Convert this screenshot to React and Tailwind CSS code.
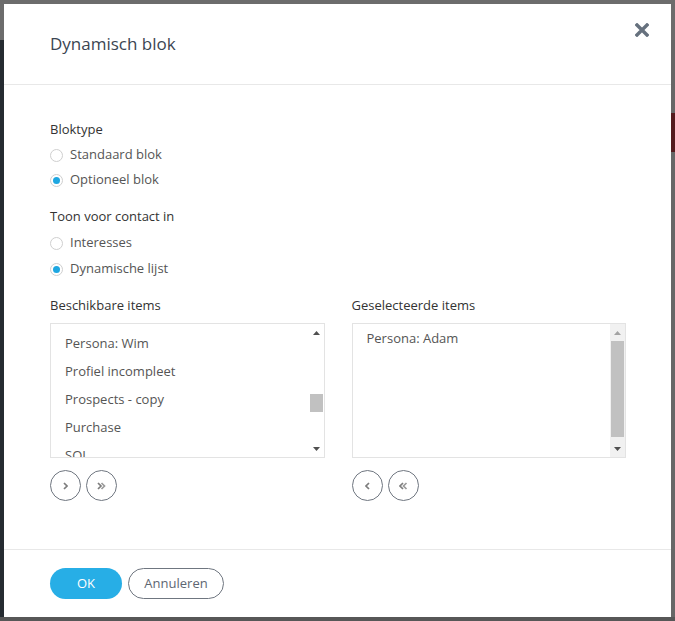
import { useState } from "react";

const font = { fontFamily: '"Open Sans", "Noto Sans", sans-serif' };

function Radio({ checked, label, onClick }) {
  return (
    <label onClick={onClick} className="flex h-[20px] cursor-pointer items-center gap-[7px]">
      <span className="flex h-[13px] w-[13px] items-center justify-center rounded-full border border-[#cfcfcf] bg-white">
        {checked && <span className="h-[7px] w-[7px] rounded-full bg-[#1ea7e1]" />}
      </span>
      <span className="text-[13px] text-[#555]">{label}</span>
    </label>
  );
}

function Arrow({ up, color }) {
  return (
    <svg width="7" height="4" viewBox="0 0 7 4">
      <path d={up ? "M0 4 L3.5 0 L7 4 Z" : "M0 0 L3.5 4 L7 0 Z"} fill={color} />
    </svg>
  );
}

function Scrollbar({ track, thumbTop, thumbHeight, upColor }) {
  return (
    <div className={`flex w-[15px] flex-col items-center ${track}`}>
      <div className="flex h-[17px] items-center justify-center">
        <Arrow up color={upColor} />
      </div>
      <div className="relative flex-1 self-stretch">
        <div
          className="absolute left-[1px] right-[1px] bg-[#c1c1c1]"
          style={{ top: thumbTop, height: thumbHeight }}
        />
      </div>
      <div className="flex h-[17px] items-center justify-center">
        <Arrow color="#505050" />
      </div>
    </div>
  );
}

function CircleBtn({ children }) {
  return (
    <button className="flex h-[31px] w-[31px] items-center justify-center rounded-full border border-[#6f7680] bg-white">
      {children}
    </button>
  );
}

function Chevron({ dir = "right", double }) {
  const one = dir === "right" ? "M1 1 L4 4 L1 7" : "M4 1 L1 4 L4 7";
  const two = dir === "right" ? "M4.5 1 L7.5 4 L4.5 7" : "M7.5 1 L4.5 4 L7.5 7";
  return (
    <svg width={double ? 9 : 5} height="8" viewBox={double ? "0 0 9 8" : "0 0 5 8"}>
      <path d={one} fill="none" stroke="#7d7d7d" strokeWidth="1.7" />
      {double && <path d={two} fill="none" stroke="#9a9a9a" strokeWidth="1.7" />}
    </svg>
  );
}

export default function App() {
  const [bloktype, setBloktype] = useState("optioneel");
  const [toon, setToon] = useState("lijst");
  const available = ["Persona: Wim", "Profiel incompleet", "Prospects - copy", "Purchase", "SQL"];

  return (
    <div className="relative flex h-[621px] w-[675px] flex-col overflow-hidden bg-[#5e5e5e]" style={font}>
      {/* page under the overlay */}
      <div className="h-[40px] bg-[#6c6c6c]" />
      <div className="flex flex-1">
        <div className="w-[5px] bg-[#252b31]" />
        <div className="flex flex-1 flex-col items-end bg-[#676767]">
          <div className="mt-[73px] h-[39px] w-[10px] bg-[#541a1d]" />
        </div>
      </div>
      <div className="h-[4px] bg-[#575757]" />

      {/* modal */}
      <div className="absolute left-[4px] top-[4px] flex h-[613px] w-[667px] flex-col bg-white">
        <div className="relative flex h-[81px] shrink-0 items-center border-b border-[#e8e8e8] pl-[46px]">
          <h2 className="text-[17px] text-[#3b4552]">Dynamisch blok</h2>
          <button className="absolute right-[22px] top-[19px]" aria-label="Sluiten">
            <svg width="14" height="14" viewBox="0 0 14 14">
              <path d="M2 2 L12 12 M12 2 L2 12" stroke="#66717e" strokeWidth="3.4" strokeLinecap="square" />
            </svg>
          </button>
        </div>

        <div className="flex flex-1 flex-col pl-[46px] pr-[45px] pt-[34px]">
          <div className="h-[20px] text-[13px] leading-[20px] text-[#333]">Bloktype</div>
          <div className="mt-[6px] flex flex-col gap-[5px]">
            <Radio label="Standaard blok" checked={bloktype === "standaard"} onClick={() => setBloktype("standaard")} />
            <Radio label="Optioneel blok" checked={bloktype === "optioneel"} onClick={() => setBloktype("optioneel")} />
          </div>

          <div className="mt-[16px] h-[20px] text-[13px] leading-[20px] text-[#333]">Toon voor contact in</div>
          <div className="mt-[7px] flex flex-col gap-[6px]">
            <Radio label="Interesses" checked={toon === "interesses"} onClick={() => setToon("interesses")} />
            <Radio label="Dynamische lijst" checked={toon === "lijst"} onClick={() => setToon("lijst")} />
          </div>

          <div className="mt-[16px] grid grid-cols-2 gap-[27px]">
            <div className="flex flex-col">
              <div className="h-[20px] text-[13px] leading-[20px] text-[#333]">Beschikbare items</div>
              <div className="mt-[8px] flex h-[135px] border border-[#e3e3e3]">
                <div className="flex-1 overflow-hidden pt-[6px]">
                  {available.map((item) => (
                    <div key={item} className="flex h-[28px] items-center pl-[14px] text-[13px] text-[#555]">
                      {item}
                    </div>
                  ))}
                </div>
                <Scrollbar track="bg-white" thumbTop={53} thumbHeight={18} upColor="#505050" />
              </div>
              <div className="mt-[12px] flex gap-[5px]">
                <CircleBtn>
                  <Chevron />
                </CircleBtn>
                <CircleBtn>
                  <Chevron double />
                </CircleBtn>
              </div>
            </div>

            <div className="flex flex-col">
              <div className="h-[20px] text-[13px] leading-[20px] text-[#333]">Geselecteerde items</div>
              <div className="mt-[8px] flex h-[135px] border border-[#e3e3e3]">
                <div className="flex-1 overflow-hidden pt-[1px]">
                  <div className="flex h-[28px] items-center pl-[14px] text-[13px] text-[#555]">Persona: Adam</div>
                </div>
                <Scrollbar track="bg-[#f1f1f1]" thumbTop={0} thumbHeight={96} upColor="#a3a3a3" />
              </div>
              <div className="mt-[12px] flex gap-[5px]">
                <CircleBtn>
                  <Chevron dir="left" />
                </CircleBtn>
                <CircleBtn>
                  <Chevron dir="left" double />
                </CircleBtn>
              </div>
            </div>
          </div>
        </div>

        <div className="flex h-[68px] shrink-0 items-center gap-[6px] border-t border-[#e8e8e8] pl-[46px]">
          <button className="h-[31px] w-[72px] rounded-full bg-[#27aee6] text-[13px] text-white">OK</button>
          <button className="h-[31px] w-[96px] rounded-full border border-[#6f7680] bg-white text-[13px] text-[#5d6672]">
            Annuleren
          </button>
        </div>
      </div>
    </div>
  );
}
